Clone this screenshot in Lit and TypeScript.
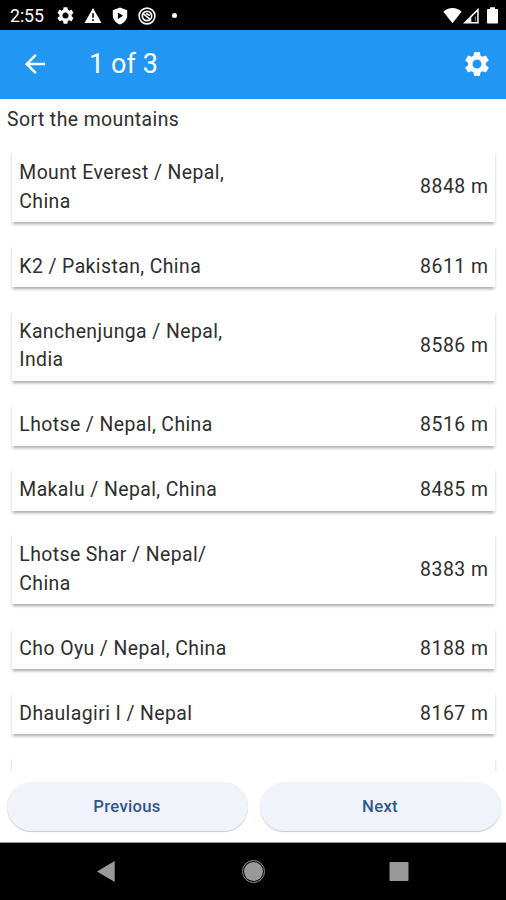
import { LitElement, html, css, svg } from "lit";
import { customElement } from "lit/decorators.js";

const GEAR =
  "M19.14 12.94c.04-.3.06-.61.06-.94 0-.32-.02-.64-.07-.94l2.03-1.58c.18-.14.23-.41.12-.61l-1.92-3.32c-.12-.22-.37-.29-.59-.22l-2.39.96c-.5-.38-1.03-.7-1.62-.94l-.36-2.54c-.04-.24-.24-.41-.48-.41h-3.84c-.24 0-.43.17-.47.41l-.36 2.54c-.59.24-1.13.57-1.62.94l-2.39-.96c-.22-.08-.47 0-.59.22L2.74 8.87c-.12.21-.08.47.12.61l2.03 1.58c-.05.3-.09.63-.09.94s.02.64.07.94l-2.03 1.58c-.18.14-.23.41-.12.61l1.92 3.32c.12.22.37.29.59.22l2.39-.96c.5.38 1.03.7 1.62.94l.36 2.54c.05.24.24.41.48.41h3.84c.24 0 .44-.17.47-.41l.36-2.54c.59-.24 1.13-.56 1.62-.94l2.39.96c.22.08.47 0 .59-.22l1.92-3.32c.12-.22.07-.47-.12-.61l-2.01-1.58zM12 15.6c-1.98 0-3.6-1.62-3.6-3.6s1.62-3.6 3.6-3.6 3.6 1.62 3.6 3.6-1.62 3.6-3.6 3.6z";

@customElement("status-bar")
export class StatusBar extends LitElement {
  static styles = css`
    :host { display: flex; height: 30px; background: #000; color: #fff; align-items: center; justify-content: space-between; box-sizing: border-box; padding: 1px 8px 0 10px; }
    .time { width: 47px; font: 400 17.8px/30px Roboto, sans-serif; letter-spacing: -0.1px; padding-top: 1px; }
    .group { display: flex; align-items: center; }
    svg { display: block; fill: currentColor; }
    .gear { width: 17px; height: 17px; margin-right: 10px; }
    .warn { margin-right: 10px; }
    .shield { margin-right: 10px; }
    .ring { margin-right: 16px; }
    .dot { width: 5px; height: 5px; border-radius: 50%; background: #fff; }
    .signal { margin: 0 8px 0 1px; }
  `;
  render() {
    return html`
      <div class="group">
        <span class="time">2:55</span>
        <svg class="gear" viewBox="2 2 20 20"><path d=${GEAR} /></svg>
        <svg class="warn" width="18" height="17" viewBox="0 0 18 17"><path fill-rule="evenodd" d="M9 1 17.5 16H.5zM8.2 6.3v4.500h1.6V6.3zM8.200 12.2v1.800h1.600v-1.800z" /></svg>
        <svg class="shield" width="16" height="18" viewBox="0 0 16 18"><path fill-rule="evenodd" d="M8 .5 15.200 3.2V8.500C15.200 12.700 12 16.100 8 17.500 4 16.100.8 12.700.8 8.500V3.200zM5.900 5.500v6.400l5.200-3.200z" /></svg>
        <svg class="ring" width="18" height="18" viewBox="0 0 18 18">${svg`
          <g fill="none" stroke="#fff"><circle cx="9" cy="9" r="7.900" stroke-width="1.600"/><circle cx="9" cy="9" r="4.700" stroke-width="1.700"/><path d="M5.500 6.800 12 12.300M8 6.500l4 2" stroke-width="1.600"/></g>`}</svg>
        <span class="dot"></span>
      </div>
      <div class="group">
        <svg width="19" height="17" viewBox="0 0 19 17"><path d="M9.500 16.300.400 4.700C3 2.200 6 1 9.500 1s6.500 1.200 9.100 3.700z" /></svg>
        <svg class="signal" width="16" height="17" viewBox="0 0 16 17"><path fill-rule="evenodd" d="M15.700.800V16.500H0zM14.200 4.500 8.300 10.500V15.100h5.900z" /><path d="M9.300 14.500V10l3-3v3.200L11 11.500v3z" fill="#000" /><path d="M11.800 9.500h1.200v5h-1.200z" fill="#777" /></svg>
        <svg width="11" height="17" viewBox="0 0 11 17"><path d="M3 .3h5V2h2.200c.500 0 .8.300.8.800v12.900c0 .500-.3.800-.8.800H.8c-.500 0-.8-.300-.8-.800V2.800C0 2.300.3 2 .8 2H3z" /></svg>
      </div>
    `;
  }
}

@customElement("mountain-row")
export class MountainRow extends LitElement {
  static properties = { name: { type: String }, height: { type: String } };
  declare name: string;
  declare height: string;
  static styles = css`
    :host { display: flex; align-items: center; justify-content: space-between; flex: none; min-height: 28.4px; padding: 8px 6.5px 6px 7px; background: #fff; color: #2e2e2e; box-shadow: 0 3px 3px -1px rgba(0, 0, 0, 0.24), 0 2px 3px rgba(0, 0, 0, 0.12); }
    .name { width: 220px; white-space: pre-line; }
    .height { letter-spacing: 0.5px; }
  `;
  render() {
    return html`<span class="name">${this.name}</span><span class="height">${this.height}</span>`;
  }
}

@customElement("app-root")
export class AppRoot extends LitElement {
  static styles = css`
    :host { display: flex; flex-direction: column; height: 900px; overflow: hidden; background: #fff; font: 400 19.4px/28.4px Roboto, sans-serif; letter-spacing: 0.42px; color: #2e2e2e; }
    .bar { height: 68.5px; flex: none; display: flex; align-items: center; background: #2196f3; color: #fff; box-sizing: border-box; padding: 0 14px 0 20px; }
    .bar svg { display: block; fill: currentColor; }
    .title { flex: 1; margin-left: 39px; padding-top: 1px; font-size: 27px; line-height: 67px; letter-spacing: 0.1px; }
    .prompt { flex: none; padding: 7px 7px 0; }
    .list { flex: 1; min-height: 0; overflow: hidden; display: flex; flex-direction: column; gap: 22.7px; padding: 17.2px 11px 0 12.3px; }
    .actions { flex: none; display: flex; gap: 12px; padding: 11px 5px 11px 7px; height: 49px; }
    .pill { flex: 1; display: flex; align-items: center; justify-content: center; border: 0; padding: 0 7px 0 6px; border-radius: 25px; background: #f0f3f9; color: #2f5794; font: 500 16.7px Roboto, sans-serif; letter-spacing: 0.3px; box-shadow: 0 1px 1px rgba(0, 0, 0, 0.22); }
    .nav { flex: none; height: 58.5px; background: #000; border-top: 1px solid #999; box-sizing: border-box; }
    .nav svg { display: block; }
  `;
  private peaks: [string, string][] = [
    ["Mount Everest / Nepal,\nChina", "8848 m"],
    ["K2 / Pakistan, China", "8611 m"],
    ["Kanchenjunga / Nepal,\nIndia", "8586 m"],
    ["Lhotse / Nepal, China", "8516 m"],
    ["Makalu / Nepal, China", "8485 m"],
    ["Lhotse Shar / Nepal/\nChina", "8383 m"],
    ["Cho Oyu / Nepal, China", "8188 m"],
    ["Dhaulagiri I / Nepal", "8167 m"],
    ["", ""],
  ];
  render() {
    return html`
      <status-bar></status-bar>
      <header class="bar">
        <svg width="30" height="30" viewBox="0 0 24 24"><path d="M20 11H7.830l5.590-5.590L12 4l-8 8 8 8 1.410-1.410L7.830 13H20v-2z" /></svg>
        <span class="title">1 of 3</span>
        <svg width="30" height="30" viewBox="0 0 24 24"><path d=${GEAR} /></svg>
      </header>
      <div class="prompt">Sort the mountains</div>
      <main class="list">
        ${this.peaks.map(([n, h]) => html`<mountain-row .name=${n} .height=${h}></mountain-row>`)}
      </main>
      <div class="actions">
        <button class="pill">Previous</button>
        <button class="pill">Next</button>
      </div>
      <footer class="nav">
        <svg width="506" height="57" viewBox="0 842.500 506 57">
          <path d="M97 871 114.700 860.500V881.500z" fill="#999" />
          <circle cx="253.500" cy="871" r="11" fill="none" stroke="#999" stroke-width="1" />
          <circle cx="253.500" cy="871" r="9.500" fill="#999" />
          <rect x="389.500" y="861.500" width="19" height="19" rx="1" fill="#999" />
        </svg>
      </footer>
    `;
  }
}
